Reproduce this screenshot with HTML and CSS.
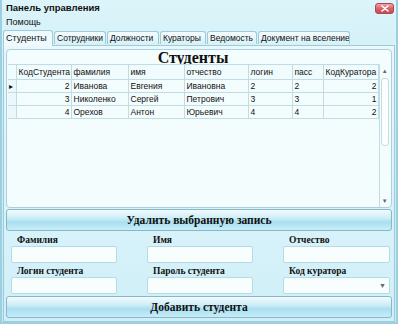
FILE: index.html
```html
<!DOCTYPE html>
<html>

<head>
    <meta charset="utf-8">
    <title>Панель управления</title>
    <link rel="stylesheet" href="styles.css">
</head>

<body>
    <div class="window">
        <div class="titlebar">
            <span class="title">Панель управления</span>
            <span class="close">
                <svg width="8" height="7" viewBox="0 0 8 7">
                    <path d="M1 1 L7 6 M7 1 L1 6" stroke="#fff" stroke-width="1.6" stroke-linecap="round" />
                </svg>
            </span>
        </div>
        <div class="menu">Помощь</div>

        <div class="tabs">
            <span class="tab active">Студенты</span>
            <span class="tab">Сотрудники</span>
            <span class="tab">Должности</span>
            <span class="tab">Кураторы</span>
            <span class="tab">Ведомость</span>
            <span class="tab">Документ на вселение</span>
        </div>

        <div class="panel">
            <div class="grid-box">
                <div class="caption">Студенты</div>
                <div class="grid-body">
                    <table class="grid">
                        <colgroup>
                            <col style="width: 8px">
                            <col style="width: 55px">
                            <col style="width: 57px">
                            <col style="width: 56px">
                            <col style="width: 64px">
                            <col style="width: 44px">
                            <col style="width: 31px">
                            <col style="width: 55px">
                        </colgroup>
                        <tr class="head">
                            <td class="rh"></td>
                            <td>КодСтудента</td>
                            <td>фамилия</td>
                            <td>имя</td>
                            <td>отчество</td>
                            <td>логин</td>
                            <td>пасс</td>
                            <td>КодКуратора</td>
                        </tr>
                        <tr>
                            <td class="rh"><span class="cur">&#9656;</span></td>
                            <td class="num">2</td>
                            <td>Иванова</td>
                            <td>Евгения</td>
                            <td>Ивановна</td>
                            <td>2</td>
                            <td>2</td>
                            <td class="num">2</td>
                        </tr>
                        <tr>
                            <td class="rh"></td>
                            <td class="num">3</td>
                            <td>Николенко</td>
                            <td>Сергей</td>
                            <td>Петрович</td>
                            <td>3</td>
                            <td>3</td>
                            <td class="num">1</td>
                        </tr>
                        <tr>
                            <td class="rh"></td>
                            <td class="num">4</td>
                            <td>Орехов</td>
                            <td>Антон</td>
                            <td>Юрьевич</td>
                            <td>4</td>
                            <td>4</td>
                            <td class="num">2</td>
                        </tr>
                    </table>
                    <div class="scroll">
                        <span class="arrow">&#9650;</span>
                        <span class="thumb"></span>
                        <span class="arrow down">&#9660;</span>
                    </div>
                </div>
            </div>

            <div class="big-btn">Удалить выбранную запись</div>

            <div class="form">
                <div class="field">
                    <label>Фамилия</label>
                    <div class="box"></div>
                </div>
                <div class="field">
                    <label>Имя</label>
                    <div class="box"></div>
                </div>
                <div class="field">
                    <label>Отчество</label>
                    <div class="box"></div>
                </div>
                <div class="field">
                    <label>Логин студента</label>
                    <div class="box"></div>
                </div>
                <div class="field">
                    <label>Пароль студента</label>
                    <div class="box"></div>
                </div>
                <div class="field">
                    <label>Код куратора</label>
                    <div class="box combo"><span>&#9660;</span></div>
                </div>
            </div>

            <div class="big-btn">Добавить студента</div>
        </div>
    </div>
</body>

</html>
```
FILE: styles.css
```css
* {
    margin: 0px;
    padding: 0px;
    box-sizing: border-box;
}

body {
    width: 398px;
    height: 324px;
    overflow: hidden;
    font-family: "Liberation Sans", "DejaVu Sans", sans-serif;
    font-size: 8.5px;
    color: #111;
}

.window {
    width: 398px;
    height: 324px;
    display: flex;
    flex-direction: column;
    background: linear-gradient(#dcf4fa, #c8edf7 40%, #c2ebf6);
    border-left: 2px solid #9dcfe0;
    border-right: 2px solid #9dcfe0;
    border-bottom: 2px solid #9dcfe0;
}

.titlebar {
    height: 15px;
    display: flex;
    align-items: center;
    justify-content: space-between;
    padding: 0 2px 0 4px;
}

.title {
    font-weight: bold;
    font-size: 9.5px;
}

.close {
    width: 19px;
    height: 11px;
    margin-top: 2px;
    display: flex;
    align-items: center;
    justify-content: center;
    border: 1px solid #b0474e;
    border-radius: 3px;
    background: linear-gradient(#f0a3a6, #d9636a 50%, #c94a52);
}

.menu {
    height: 13px;
    padding-left: 4px;
    line-height: 15px;
    font-size: 9px;
}

.tabs {
    height: 17px;
    display: flex;
    align-items: flex-end;
    padding-left: 1px;
}

.tab {
    height: 13px;
    line-height: 12px;
    margin-right: 1px;
    padding: 0 2px;
    white-space: nowrap;
    overflow: hidden;
    border: 1px solid #9fcad8;
    border-bottom: none;
    border-radius: 3px 3px 0 0;
    background: linear-gradient(#f4fcfe, #d7f1f8);
    margin-bottom: 1px;
}

.tab:nth-child(1) { width: 50px; font-size: 9px; }
.tab:nth-child(2) { width: 52px; }
.tab:nth-child(3) { width: 52px; }
.tab:nth-child(4) { width: 46px; }
.tab:nth-child(5) { width: 50px; }
.tab:nth-child(6) { width: 92px; }

.tab.active {
    height: 16px;
    line-height: 15px;
    background: #eefafd;
    position: relative;
    z-index: 1;
    margin-bottom: -1px;
}

.panel {
    flex: 1;
    margin: 0 1px 0 1px;
    border: 1px solid #9fcad8;
    background: linear-gradient(#e8f8fc, #cfeff8);
    padding: 3px 2px 2px 2px;
    display: flex;
    flex-direction: column;
}

.grid-box {
    height: 159px;
    border: 1px solid #a9d0dc;
    border-radius: 4px;
    background: #f4fdfe;
    padding: 0 1px 0 1px;
    display: flex;
    flex-direction: column;
}

.caption {
    height: 14px;
    width: 370px;
    text-align: center;
    font-family: "Liberation Serif", serif;
    font-weight: bold;
    font-size: 16px;
    line-height: 15px;
}

.grid-body {
    flex: 1;
    display: flex;
}

.grid {
    width: 370px;
    border-collapse: collapse;
    table-layout: fixed;
    align-self: flex-start;
}

.grid td {
    height: 13px;
    border: 1px solid #c3dbe3;
    padding: 0 1px 0 2px;
    white-space: nowrap;
    overflow: hidden;
    line-height: 11px;
}

.grid tr.head td {
    height: 15px;
    background: #f0fbfd;
}

.grid td.rh {
    padding: 0;
    background: #ebf8fb;
    border-left: none;
}

.grid td.num {
    text-align: right;
}

.cur {
    font-size: 8px;
    padding-left: 1px;
}

.scroll {
    width: 12px;
    display: flex;
    flex-direction: column;
    align-items: center;
    border-left: 1px solid #c3dbe3;
    padding: 2px 0 1px 0;
}

.arrow {
    font-size: 6px;
    color: #666;
    line-height: 10px;
}

.thumb {
    width: 8px;
    height: 68px;
    margin-top: 2px;
    border: 1px solid #c6dce4;
    border-radius: 3px;
    background: #fafeff;
}

.arrow.down {
    margin-top: auto;
}

.big-btn {
    height: 22px;
    margin-top: 1px;
    border: 1px solid #86b8c8;
    border-radius: 3px;
    background: linear-gradient(#f2fbfd, #cdeef7 40%, #a9dff0 60%, #c8edf7);
    font-family: "Liberation Serif", serif;
    font-weight: bold;
    font-size: 11.5px;
    text-align: center;
    line-height: 21px;
}

.form {
    height: 64px;
    display: grid;
    grid-template-columns: 136px 136px 110px;
    padding: 3px 0 0 5px;
}

.field {
    display: flex;
    flex-direction: column;
}

.field label {
    height: 12px;
    padding-left: 6px;
    font-family: "Liberation Serif", serif;
    font-weight: bold;
    font-size: 9.5px;
    line-height: 12px;
}

.box {
    width: 106px;
    height: 17px;
    border: 1px solid #b7dbe6;
    border-radius: 2px;
    background: #f8fdfe;
}

.field:nth-child(3) .box,
.field:nth-child(6) .box {
    width: 107px;
}

.combo {
    display: flex;
    align-items: center;
    justify-content: flex-end;
    padding-right: 3px;
    font-size: 7px;
    color: #666;
}
```
